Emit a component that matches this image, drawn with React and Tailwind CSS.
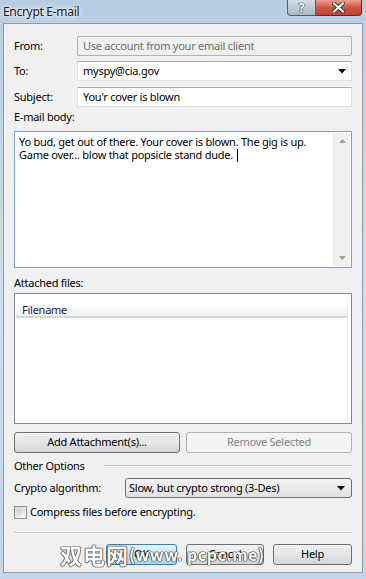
import React from "react";

const font = { fontFamily: '"Noto Sans", "Open Sans", sans-serif' };

const Arrow = () => (
  <svg width="8" height="5" viewBox="0 0 8 5" className="shrink-0">
    <path d="M0 0h8L4 4.5z" fill="#000" />
  </svg>
);

const WinButton = ({ children, className = "", disabled = false }) => (
  <div
    className={
      "flex items-center justify-center h-[21px] rounded-[3px] border " +
      (disabled
        ? "border-[#adb2b5] bg-[#f4f4f4] text-[#838383] "
        : "border-[#707070] bg-gradient-to-b from-[#f2f2f2] via-[#e6e6e6] to-[#d3d3d3] text-[#000] ") +
      className
    }
  >
    {children}
  </div>
);

export default function App() {
  return (
    <div
      className="w-[366px] h-[579px] flex flex-col bg-gradient-to-b from-[#b9cde2] via-[#cfdceb] to-[#c4d6e8] overflow-hidden relative"
      style={font}
    >
      {/* Title bar */}
      <div className="h-[23px] flex justify-between shrink-0">
        <div className="pl-[3px] pt-[3px] text-[12px] tracking-[-0.3px] text-[#1a1a1a] [text-shadow:0_0_6px_#fff,0_0_3px_#fff]">
          Encrypt E-mail
        </div>
        <div className="flex mr-[4px] self-start">
          <div className="w-[29px] h-[16px] rounded-bl-[4px] border border-t-0 border-[#4f5f74] bg-gradient-to-b from-[#d5dee8] to-[#a7b6c8] flex items-center justify-center text-[12px] font-bold text-white leading-[14px] [text-shadow:0_0_1px_#333,0_0_1px_#333,0_0_1px_#333]">
            ?
          </div>
          <div className="w-[46px] h-[16px] rounded-br-[4px] border border-t-0 border-l-0 border-[#5a2a22] bg-gradient-to-b from-[#e9a394] via-[#d2533f] to-[#c2422d] flex items-center justify-center">
            <svg width="13" height="11" viewBox="0 0 13 11">
              <path d="M2 1.5l9 8M11 1.5l-9 8" stroke="#3a3a3a" strokeWidth="4" strokeLinecap="square" />
              <path d="M2 1.5l9 8M11 1.5l-9 8" stroke="#fff" strokeWidth="2" strokeLinecap="square" />
            </svg>
          </div>
        </div>
      </div>

      {/* Client area */}
      <div className="flex-1 mx-[3px] mb-[6px] border border-[#8a9ab0] bg-[#f0f0f0] flex flex-col px-[10px] pt-[12px] text-[11px] tracking-[-0.25px] text-[#000] whitespace-nowrap">
        {/* From */}
        <div className="flex items-center h-[20px]">
          <div className="w-[63px]">From:</div>
          <div className="flex-1 h-full rounded-[2px] border border-[#adb2b5] bg-[#f0f0f0] text-[#6d6d6d] flex items-center pl-[5px]">
            Use account from your email client
          </div>
        </div>
        {/* To */}
        <div className="flex items-center h-[20px] mt-[5px]">
          <div className="w-[63px]">To:</div>
          <div className="flex-1 h-full border border-[#dbdfe6] border-t-[#abadb3] bg-white flex items-center pl-[5px] pr-[5px] justify-between">
            <span>myspy@cia.gov</span>
            <Arrow />
          </div>
        </div>
        {/* Subject */}
        <div className="flex items-center h-[20px] mt-[6px]">
          <div className="w-[63px]">Subject:</div>
          <div className="flex-1 h-full border border-[#dbdfe6] border-t-[#abadb3] bg-white flex items-center pl-[5px]">
            You'r cover is blown
          </div>
        </div>

        <div className="h-[16px] mt-[2px] flex items-center">E-mail body:</div>
        <div className="mt-[6px] h-[137px] border border-[#7da2ce] bg-white flex">
          <div className="flex-1 pl-[4px] pt-[3px] leading-[13px]">
            Yo bud, get out of there. Your cover is blown. The gig is up.
            <br />
            Game over… blow that popsicle stand dude.
            <span className="inline-block w-px h-[13px] ml-[4px] bg-black align-[-3px]" />
          </div>
          <div className="w-[17px] my-px mr-px bg-[#f0f0f0] border-l border-[#e6e6e6] flex flex-col justify-between items-center py-[6px]">
            <svg width="7" height="4" viewBox="0 0 7 4">
              <path d="M0 4L3.5 0 7 4z" fill="#a0a0a0" />
            </svg>
            <svg width="7" height="4" viewBox="0 0 7 4">
              <path d="M0 0h7L3.5 4z" fill="#a0a0a0" />
            </svg>
          </div>
        </div>

        <div className="h-[16px] mt-[7px] flex items-center">Attached files:</div>
        <div className="mt-[2px] h-[131px] border border-[#828790] bg-white flex flex-col pt-[10px] px-px">
          <div className="h-[14px] mr-[2px] bg-gradient-to-b from-[#ffffff] to-[#f1f2f4] border-b-2 border-[#d5d5d5] flex items-center pl-[6px] text-[#1c1c5a] border-r border-r-[#e5e5e5]">
            Filename
          </div>
          <div className="flex-1 mr-[2px] border-r border-[#eef0f4]" />
        </div>

        <div className="mt-[8px] flex gap-[6px]">
          <WinButton className="flex-1">Add Attachment(s)...</WinButton>
          <WinButton className="flex-1" disabled>
            Remove Selected
          </WinButton>
        </div>

        <div className="h-[16px] mt-[5px] flex items-center">
          <span className="w-[67px] shrink-0">Other Options</span>
          <div className="flex-1 ml-[23px] h-px bg-[#c8c8c8] border-b border-white box-content" />
        </div>

        <div className="flex items-center h-[20px] mt-[4px]">
          <div className="w-[111px]">Crypto algorithm:</div>
          <div className="flex-1 h-full rounded-[3px] border border-[#707070] bg-gradient-to-b from-[#f4f4f4] to-[#e1e1e1] flex items-center justify-between pl-[3px] pr-[6px]">
            <span>Slow, but crypto strong (3-Des)</span>
            <Arrow />
          </div>
        </div>

        <div className="flex items-center h-[16px] mt-[6px]">
          <div className="w-[13px] h-[13px] border border-[#8f8f8f] bg-gradient-to-br from-[#dcdcdc] to-[#f8f8f8] p-[2px]">
            <div className="w-full h-full bg-gradient-to-br from-[#cbcbcb] to-[#f2f2f2]" />
          </div>
          <span className="ml-[3px]">Compress files before encrypting.</span>
        </div>

        <div className="mt-[12px] h-px bg-[#c8c8c8] border-b border-white box-content" />

        <div className="mt-[10px] flex justify-end gap-[9px] relative">
          <div className="w-[71px] h-[21px] rounded-[3px] border border-[#3c7fb1] bg-gradient-to-b from-[#e8f6fd] via-[#bfe6fc] to-[#a2d6f5] flex items-center justify-center">
            OK
          </div>
          <WinButton className="w-[78px]">Cancel</WinButton>
          <WinButton className="w-[79px]">Help</WinButton>
          <div
            className="absolute left-[46px] top-[-2px] font-bold text-white leading-[24px] tracking-normal flex items-center [text-shadow:0_0_1px_#222,0_0_1px_#222,0_0_1px_#222,0_0_1px_#222]"
            style={{ fontFamily: '"Noto Sans CJK SC", "DejaVu Sans", sans-serif' }}
          >
            <span className="text-[22px] tracking-[1px]">双电网</span>
            <span className="text-[16px] tracking-[0.5px]">(www. pcpc.me)</span>
          </div>
        </div>
      </div>
    </div>
  );
}
